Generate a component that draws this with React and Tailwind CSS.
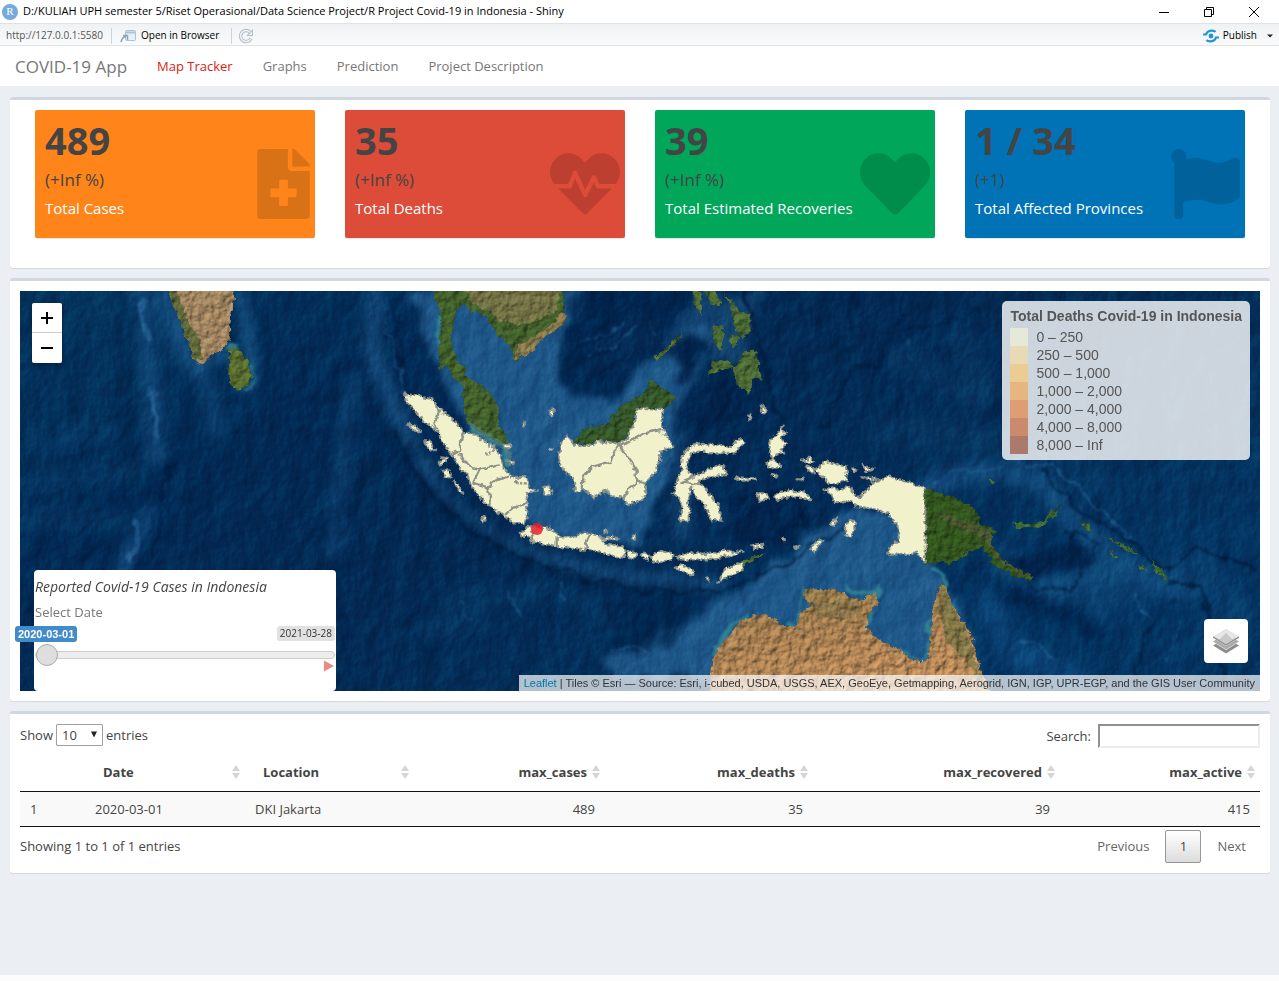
import React from "react";
import { FaFileMedical, FaHeartbeat, FaHeart, FaFlag } from "react-icons/fa";

const STATS = [
  { value: "489", change: "(+Inf %)", label: "Total Cases", bg: "bg-[#ff851b]", Icon: FaFileMedical, size: "h-[70px] w-[53px]" },
  { value: "35", change: "(+Inf %)", label: "Total Deaths", bg: "bg-[#dd4b39]", Icon: FaHeartbeat, size: "h-[70px] w-[70px]" },
  { value: "39", change: "(+Inf %)", label: "Total Estimated Recoveries", bg: "bg-[#00a65a]", Icon: FaHeart, size: "h-[70px] w-[70px]" },
  { value: "1 / 34", change: "(+1)", label: "Total Affected Provinces", bg: "bg-[#0073b7]", Icon: FaFlag, size: "h-[70px] w-[70px]" },
];

const LEGEND = [
  ["bg-[#e6e9d8]", "0 – 250"],
  ["bg-[#e8dab4]", "250 – 500"],
  ["bg-[#e9cd92]", "500 – 1,000"],
  ["bg-[#e7b57e]", "1,000 – 2,000"],
  ["bg-[#df9d74]", "2,000 – 4,000"],
  ["bg-[#cb8a6b]", "4,000 – 8,000"],
  ["bg-[#ab7a6c]", "8,000 – Inf"],
];

const NAV = ["Map Tracker", "Graphs", "Prediction", "Project Description"];

const COLUMNS = [
  { name: "Date", width: "w-[160px]" },
  { name: "Location", width: "w-[169px]" },
  { name: "max_cases", width: "w-[191px]", numeric: true },
  { name: "max_deaths", width: "w-[208px]", numeric: true },
  { name: "max_recovered", width: "w-[247px]", numeric: true },
  { name: "max_active", width: "w-[200px]", numeric: true },
];

/* Western half of the archipelago, drawn at three units per map pixel. */
const WEST_PROVINCES = [
  "72,340 90,345 125,352 160,358 170,378 188,398 230,428 250,455 290,465 315,480 345,500 362,528 370,560 395,592 430,588 440,605 455,625 470,632 440,640 442,700 435,732 400,730 375,710 330,680 285,640 262,590 235,555 215,522 195,500 172,452 140,430 110,400 78,365",
  "563,463 540,488 538,545 556,575 580,595 585,635 610,630 640,652 678,630 690,645 728,650 740,676 790,658 802,600 832,572 842,512 882,500 852,460 845,425 850,390 770,385 765,430 740,478 712,490 655,484 640,498 580,494",
  "440,738 436,752 415,765 452,770 455,786 525,800 590,805 640,812 700,828 732,836 730,800 680,795 662,770 625,756 598,762 590,775 540,770 522,748 478,742",
  "918,510 950,490 1050,500 1083,472 1096,488 1062,520 960,515 930,520 920,560 935,592 975,572 1030,555 1042,582 990,590 952,604 985,640 1018,680 1025,722 995,720 975,680 950,652 935,620 925,650 930,720 900,725 905,660 878,640 890,600 905,570 908,530",
  "740,815 765,815 772,830 745,836",
  "783,825 795,815 808,825 800,842",
  "812,830 840,815 880,825 875,838 820,848",
  "890,828 935,818 985,826 1030,812 1095,816 1050,828 985,838 900,838",
  "885,860 910,855 945,875 942,888 905,876",
  "1012,908 1040,865 1090,845 1088,870 1055,885",
  "1115,800 1150,792 1148,802 1120,808",
  "405,605 425,590 440,595 448,615 430,612",
  "492,625 508,620 514,638 498,645",
  "85,435 100,433 120,452 108,455",
  "135,485 152,482 165,510 150,512",
  "178,550 190,530 200,535 185,555",
  "188,570 205,568 212,592 198,590",
  "220,605 235,612 252,645 240,638",
  "508,390 520,388 522,405 512,408",
  "368,495 395,492 392,505 372,504",
  "385,545 405,540 400,552 388,555",
  "1068,592 1125,595 1128,602 1070,602",
  "1125,640 1150,640 1168,655 1140,665",
  "1145,375 1155,380 1150,402 1143,395",
  "665,772 718,770 715,776 668,780",
  "1104,408 1112,406 1114,420 1106,420",
];
const WEST_BORDERS = [
  "168,375 175,402 160,430 170,450",
  "250,455 240,490 238,512 215,524",
  "238,520 262,555 300,568 360,556",
  "300,568 280,608 322,622 350,600 385,590",
  "322,622 330,650 328,680",
  "440,670 398,684 375,705",
  "608,630 610,590 640,560 690,545 712,500 740,490 790,460 845,450",
  "712,490 735,520 770,572 770,610 745,632 730,655",
  "770,600 800,612",
  "455,755 462,786",
  "530,770 530,800",
  "630,758 615,790 625,808",
  "938,592 905,605 960,612",
];
/* Eastern half, same scale with its own origin. */
const EAST_PROVINCES = [
  "300,650 320,628 345,605 385,588 440,605 495,625 498,850 465,818 430,822 385,825 388,805 405,788 418,788 412,735 385,702 330,685 295,680 270,662 222,672 215,645 190,628 235,628 265,618 285,650",
  "165,570 185,552 210,546 258,562 264,600 215,612 188,592",
  "28,485 50,465 68,440 76,460 60,482 80,490 62,510 80,524 50,520 42,545 30,520",
  "20,550 40,540 68,560 40,565",
  "125,540 150,532 164,544 140,548",
  "140,560 158,565 165,582 148,580",
  "-10,640 15,640 28,655 0,664",
  "45,645 80,632 130,635 155,662 130,655 90,650 50,660",
  "258,735 270,715 288,730 275,772 258,770",
  "150,810 178,776 190,780 165,815",
  "212,735 230,712 228,735 216,742",
  "305,555 340,568 320,576",
  "305,592 350,595 340,600",
  "110,598 135,596 130,605",
  "32,585 55,588 45,595",
  "100,800 115,798 114,808",
];

const poly = (list) => list.map((points) => <polygon key={points} points={points} />);

function SatelliteMap() {
  return (
    <svg
      className="absolute inset-0 h-full w-full"
      viewBox="20 291 1240 400"
      preserveAspectRatio="xMidYMid slice"
      colorInterpolationFilters="sRGB"
      role="img"
      aria-label="Satellite map of Indonesia with provinces highlighted"
    >
      <defs>
        <linearGradient id="ocean" x1="0" y1="0" x2="1" y2="0.6">
          <stop offset="0" stopColor="#04355f" />
          <stop offset="0.3" stopColor="#022954" />
          <stop offset="0.55" stopColor="#032953" />
          <stop offset="1" stopColor="#043462" />
        </linearGradient>
        <linearGradient id="outback" x1="0" y1="0" x2="0.3" y2="1">
          <stop offset="0" stopColor="#8a7745" />
          <stop offset="0.5" stopColor="#a98052" />
          <stop offset="1" stopColor="#bd8d5b" />
        </linearGradient>
        <filter id="soft" x="-20%" y="-20%" width="140%" height="140%">
          <feGaussianBlur stdDeviation="6" />
        </filter>
        <filter id="softer" x="-20%" y="-20%" width="140%" height="140%">
          <feTurbulence type="fractalNoise" baseFrequency="0.04" numOctaves="4" seed="8" result="n" />
          <feDisplacementMap in="SourceGraphic" in2="n" scale="22" xChannelSelector="R" yChannelSelector="G" />
          <feGaussianBlur stdDeviation="3" />
        </filter>
        <filter id="coast" x="-5%" y="-5%" width="110%" height="110%">
          <feTurbulence type="fractalNoise" baseFrequency="0.14" numOctaves="2" seed="3" result="n" />
          <feDisplacementMap in="SourceGraphic" in2="n" scale="6" xChannelSelector="R" yChannelSelector="G" />
        </filter>
        <filter id="ridge" x="-5%" y="-5%" width="110%" height="110%">
          <feTurbulence type="fractalNoise" baseFrequency="0.05" numOctaves="4" seed="5" result="n" />
          <feDisplacementMap in="SourceGraphic" in2="n" scale="18" xChannelSelector="R" yChannelSelector="G" />
          <feGaussianBlur stdDeviation="1" />
        </filter>
        <filter id="relief" x="0" y="0" width="100%" height="100%">
          <feTurbulence type="fractalNoise" baseFrequency="0.04 0.03" numOctaves="5" seed="21" result="n" />
          <feDiffuseLighting in="n" surfaceScale="3" lightingColor="#ffffff">
            <feDistantLight azimuth="215" elevation="30" />
          </feDiffuseLighting>
        </filter>
        <filter id="ground" x="-5%" y="-5%" width="110%" height="110%">
          <feTurbulence type="fractalNoise" baseFrequency="0.15" numOctaves="3" seed="3" result="n" />
          <feDisplacementMap in="SourceGraphic" in2="n" scale="8" xChannelSelector="R" yChannelSelector="G" result="shape" />
          <feTurbulence type="fractalNoise" baseFrequency="0.12" numOctaves="4" seed="9" result="g" />
          <feDiffuseLighting in="g" surfaceScale="2" lightingColor="#ffffff" result="lit">
            <feDistantLight azimuth="225" elevation="55" />
          </feDiffuseLighting>
          <feComposite in="shape" in2="lit" operator="arithmetic" k1="1.15" k2="0.05" k3="0" k4="0" result="mix" />
          <feComposite in="mix" in2="shape" operator="in" />
        </filter>
      </defs>

      <rect x="20" y="291" width="1240" height="400" fill="url(#ocean)" />

      {/* Raised sea floor and trenches */}
      <g filter="url(#soft)" fill="none" strokeLinecap="round" strokeLinejoin="round">
        <path d="M143 290 L146 340 L154 400 L156 455" stroke="#17568c" strokeWidth="20" opacity="0.5" />
        <path d="M160 300 Q178 360 200 372 Q215 400 215 430" stroke="#145084" strokeWidth="18" opacity="0.5" />
        <path d="M165 290 L195 368 L226 352 L245 390 L254 375 L240 291" stroke="#1d5f92" strokeWidth="7" />
        <path d="M150 510 L130 550 L120 575" stroke="#15548a" strokeWidth="14" opacity="0.6" />
        <path d="M352 380 L345 440 L338 500 L334 550" stroke="#12497b" strokeWidth="16" opacity="0.5" />
        <path d="M376 291 L372 350 L390 400 L410 440" stroke="#185384" strokeWidth="16" opacity="0.8" />
        <path d="M420 460 Q450 520 520 552 Q600 580 720 586" stroke="#164f80" strokeWidth="16" opacity="0.8" />
        <path d="M395 432 Q420 500 500 548 Q580 592 700 592" stroke="#001f45" strokeWidth="9" />
        <path d="M35 440 L110 430 M30 480 L130 470 M30 520 L120 520" stroke="#0c4576" strokeWidth="24" opacity="0.35" />
        <path d="M445 600 L560 590 L620 620 M430 630 L480 620" stroke="#0b4070" strokeWidth="22" opacity="0.4" />
        <path d="M900 360 L980 390 L960 340 M880 430 L990 440 L1100 480" stroke="#0d4574" strokeWidth="30" opacity="0.3" />
        <path d="M925 490 Q980 460 1040 480 L1080 530 L1150 580 L1185 590" stroke="#134e80" strokeWidth="22" opacity="0.8" />
        <path d="M1000 560 L1060 590 L1120 570" stroke="#124d7e" strokeWidth="24" opacity="0.8" />
        <path d="M1090 610 L1200 560 L1240 620" stroke="#0e4b7d" strokeWidth="30" opacity="0.4" />
        <path d="M985 600 L1010 650 L1080 680" stroke="#10518a" strokeWidth="26" opacity="0.5" />
        <path d="M1000 590 L1080 620 L1100 640" stroke="#012650" strokeWidth="18" />
      </g>
      <g filter="url(#softer)" fill="#1d5788">
        <path d="M455 291 L585 291 L565 340 L558 372 L575 398 L610 398 L640 370 L680 350 L690 330 L710 320 L712 340 L690 380 L675 410 L672 460 L650 520 L640 545 L560 540 L520 520 L470 430 L440 380 L410 291 Z" />
        <path d="M700 691 L688 670 L620 680 L600 660 L690 620 L760 575 L800 548 L838 520 L860 505 L920 530 L935 570 L960 600 L985 691 Z" />
        <path d="M635 310 Q660 310 655 340 L620 370 L575 375 L570 345 Z" opacity="0.35" />
        <path d="M700 360 L745 365 L765 291 L700 291 L660 345 Z" opacity="0.5" />
        <path d="M672 440 L690 430 L690 530 L670 545 Z" opacity="0.4" />
      </g>
      <g filter="url(#softer)" fill="#02234c">
        <path d="M570 295 L690 291 L660 330 L600 385 L565 365 Z" opacity="0.75" />
        <path d="M695 385 L750 372 L745 415 L700 430 L680 415 Z" />
        <path d="M672 345 L705 335 L712 350 L680 382 Z" />
        <path d="M730 495 L800 490 L810 520 L780 545 L720 535 Z" opacity="0.8" />
        <path d="M600 600 L690 600 L670 650 L615 650 Z" opacity="0.7" />
        <path d="M990 550 L1030 560 L1075 535 L1090 560 L1030 580 Z" />
      </g>

      {/* Fine ridges on the sea floor */}
      <g filter="url(#ridge)" fill="none" stroke="#001b3d" strokeWidth="2" opacity="0.7">
        <path d="M167 460 L158 530 L152 575" />
        <path d="M851 291 L850 380 L820 430 M905 291 L900 325 L880 365 L852 370 M900 332 L950 325 L985 305" strokeWidth="3" />
        <path d="M742 291 L762 350 L772 400 L785 420" strokeWidth="5" />
        <path d="M395 432 Q420 500 500 548 Q580 592 700 592 Q730 592 790 560 L850 520" strokeWidth="3" />
        <path d="M1040 470 L1080 510 L1130 540 L1165 570 L1200 550 L1258 570" strokeWidth="3" />
        <path d="M1165 582 L1200 590 L1212 630 L1225 691" strokeWidth="4" />
        <path d="M1135 691 L1145 630 L1175 600 M1060 530 L1100 545 L1070 590 L1030 585" />
        <path d="M740 500 Q800 480 808 510 Q800 540 745 540" strokeWidth="4" />
        <path d="M575 350 L610 330 M580 365 L625 340 M600 375 L645 345 M600 325 L630 318" />
        <path d="M437 591 L436 691 M290 560 L285 680 M340 530 L350 680" opacity="0.4" />
        <path d="M386 310 L390 340 L400 360 M396 300 L400 345" />
        <path d="M50 470 L120 410 M55 495 L130 430 M60 520 L135 450 M70 540 L140 475 M80 560 L140 505" opacity="0.5" />
      </g>
      <g filter="url(#ridge)" fill="none" stroke="#3273a5" strokeWidth="1.4" opacity="0.55">
        <path d="M152 385 L156 440 M143 295 L145 340 M135 520 L138 545 L128 560" strokeWidth="5" />
        <path d="M580 340 L625 325 M590 358 L640 330 M650 320 L655 335" />
        <path d="M385 300 L392 350 L410 410" />
        <path d="M1000 465 Q1050 455 1090 500 L1140 545 M930 490 Q950 465 1000 468" />
        <path d="M1130 590 L1150 620 M1180 620 L1170 660 M1020 640 L1060 660 M905 340 L915 360" />
        <path d="M460 600 L470 620 M510 590 L520 615 M560 580 L565 600 M610 650 L650 652" />
      </g>

      <rect x="20" y="291" width="1240" height="400" filter="url(#relief)" className="mix-blend-soft-light" opacity="0.45" />

      {/* Coastal shallows */}
      <g filter="url(#ridge)" fill="none" stroke="#36909b" strokeWidth="5" opacity="0.75">
        <path d="M712 655 L722 640 L740 622 L752 612" />
        <path d="M803 590 L822 597 M850 594 L877 588 L868 628" />
        <path d="M785 628 L797 626 L803 595" strokeWidth="3" />
        <path d="M900 650 L925 661 L932 620" strokeWidth="3" />
        <path d="M930 566 L948 575 L944 590 L955 612" />
        <path d="M225 345 L238 350" strokeWidth="8" />
        <path d="M440 310 L440 350 M467 425 L500 446 M505 440 L508 465" />
        <path d="M252 365 L254 380 L243 391" strokeWidth="2" />
      </g>

      {/* Land outside Indonesia */}
      <g filter="url(#ground)">
        <path d="M168 289 L172 304 L180 320 L186 335 L190 350 L194 360 L200 364 L208 362 L213 354 L225 348 L230 340 L229 325 L233 309 L235 289 Z" fill="#a28661" />
        <path d="M168 289 L172 304 L180 320 L186 335 L190 350 L196 361 L203 358 L200 340 L190 325 L184 308 L176 289 Z" fill="#626a3a" />
        <path d="M230 350 L238 348 L248 360 L253 375 L249 385 L240 390 L232 389 L229 375 Z" fill="#5a6e2f" />
        <path d="M433 289 L438 305 L442 325 L438 345 L440 368 L447 366 L452 375 L462 386 L463 405 L466 420 L475 428 L490 438 L500 445 L508 443 L505 432 L498 425 L498 408 L492 395 L478 382 L468 378 L464 368 L456 357 L450 345 L452 330 L457 310 L465 303 L469 313 L476 311 L487 318 L494 330 L505 340 L512 345 L512 358 L517 361 L531 350 L541 337 L550 330 L561 322 L564 309 L562 289 Z" fill="#43612c" />
        <path d="M466 289 L472 305 L490 311 L500 322 L515 325 L540 320 L558 310 L560 289 Z" fill="#737245" />
        <path d="M515 360 L518 345 L535 335 L548 328 L556 322 L563 310 L566 322 L541 341 L530 352 Z" fill="#8b7a4c" />
        <path d="M573 444 L586 427 L606 425 L622 404 L640 396 L653 380 L662 388 L676 397 L664 410 L636 409 L634 424 L626 440 L618 444 L598 441 L591 446 Z" fill="#36592a" />
        <path d="M654 358 L668 345 L682 332 L678 342 L662 356 L655 361 Z M704 289 L712 305 L722 307 L716 289 Z M722 289 L740 310 L750 315 L752 330 L742 340 L735 330 L730 305 Z M712 325 L722 325 L724 350 L715 348 Z M730 335 L740 338 L732 350 Z M708 375 L712 362 L728 360 L735 368 L745 352 L756 350 L762 380 L752 378 L750 394 L738 386 L732 368 L718 372 Z M692 291 L702 291 L702 316 L696 308 Z" fill="#4c6b35" />
        <path d="M924 488 L947 495 L968 503 L978 513 L980 523 L1000 530 L990 535 L990 543 L1007 563 L1032 576 L1030 580 L1013 575 L997 567 L983 548 L967 552 L957 562 L925 564 Z" fill="#34571f" />
        <path d="M935 512 L960 520 L975 524 L990 533 L993 548 L1007 563 L1032 577 L1010 570 L995 556 L982 536 L950 524 Z" fill="#4a5730" />
        <path d="M1012 524 L1040 522 L1056 508 L1053 518 L1040 528 L1015 527 Z M1058 502 L1062 510 L1056 508 Z M1080 517 L1094 530 L1088 533 Z M1100 534 L1130 548 L1140 557 L1125 550 Z M1108 550 L1120 556 L1112 556 Z M1136 565 L1150 568 L1142 571 Z M1148 556 L1160 568 L1168 582 L1158 573 Z M988 481 L997 481 L992 485 Z" fill="#3e6733" />
        <path d="M742 562 L752 556 L768 554 L750 562 L742 567 Z" fill="#4e6f34" />
        <path d="M708 695 L711 675 L712 660 L722 643 L740 622 L752 615 L765 614 L775 620 L785 627 L795 626 L800 612 L815 605 L803 598 L804 588 L825 588 L840 592 L860 600 L877 592 L877 604 L870 610 L866 628 L880 640 L897 649 L915 661 L926 661 L931 640 L932 610 L938 590 L942 582 L948 592 L955 612 L963 622 L972 635 L977 655 L983 675 L992 695 Z" fill="url(#outback)" />
        <path d="M942 584 L948 594 L953 612 L968 632 L974 655 L985 691 L965 660 L945 640 L938 610 Z" fill="#6f7040" opacity="0.7" />
        <path d="M806 602 L860 602 L864 612 L845 620 L815 616 Z" fill="#85734a" opacity="0.7" />
      </g>

      {/* Indonesian provinces */}
      <g filter="url(#coast)" fill="#f1f2cb" stroke="#8f9188" strokeWidth="7" strokeDasharray="9 5" strokeLinejoin="round">
        <g transform="translate(380 280) scale(0.3333)">
          {poly(WEST_PROVINCES)}
          {WEST_BORDERS.map((points) => (
            <polyline key={points} points={points} fill="none" strokeDasharray="none" />
          ))}
          <path d="M262 430 L300 452 L350 480 L385 520 L385 560" fill="none" stroke="#5f8b80" strokeWidth="14" opacity="0.55" strokeDasharray="none" />
          <path d="M300 480 L345 505 L335 520 L312 520" fill="none" />
          <circle cx="432" cy="432" r="4" />
          <circle cx="512" cy="506" r="4" />
          <circle cx="312" cy="718" r="5" />
          <circle cx="675" cy="755" r="4" />
          <circle cx="762" cy="770" r="6" />
          <circle cx="984" cy="894" r="5" />
        </g>
        <g transform="translate(760 280) scale(0.3333)">
          {poly(EAST_PROVINCES)}
          <circle cx="285" cy="568" r="5" />
          <circle cx="72" cy="778" r="5" />
          <circle cx="10" cy="388" r="7" />
        </g>
      </g>
      <circle cx="537" cy="529" r="6" fill="#e8202a" opacity="0.85" />
    </svg>
  );
}

function LayersIcon() {
  return (
    <svg viewBox="0 0 26 26" className="h-[26px] w-[26px]" aria-hidden="true">
      <path d="M0 17.500 L13 25.500 L26 17.500 L23 15.700 L13 22 L3 15.700 Z" fill="#8d8d8d" />
      <path d="M0 13.500 L13 21.500 L26 13.500 L23 11.700 L13 18 L3 11.700 Z" fill="#ababab" />
      <path d="M0 9 L13 17 L26 9 L13 1 Z" fill="#c9c9c9" />
      <path d="M0 9 L13 1 L26 9 L19 11 L13 5 L7 11 Z" fill="#e6e6e6" />
      <path d="M0 9 L13 17 L26 9" fill="none" stroke="#8a8a8a" strokeWidth="1.2" />
    </svg>
  );
}

function Box({ label, className, children }) {
  return (
    <section aria-label={label} className={`rounded-[3px] border-t-[3px] border-[#d2d6de] bg-white p-2.5 shadow-[0_1px_1px_rgba(0,0,0,0.1)] ${className || ""}`}>
      {children}
    </section>
  );
}

function TitleBar() {
  return (
    <header className="flex h-[23px] items-center bg-white pr-5 pl-0.5 text-[11px] text-black">
      <span className="flex h-4 w-4 items-center justify-center rounded-full bg-[#75aadb] font-['Liberation_Serif',serif] text-[11px] text-white">R</span>
      <h1 className="ml-[5px] flex-1">D:/KULIAH UPH semester 5/Riset Operasional/Data Science Project/R Project Covid-19 in Indonesia - Shiny</h1>
      <div className="flex items-center gap-[35px]">
        <button aria-label="Minimize">
          <svg viewBox="0 0 10 10" className="h-2.5 w-2.5"><path d="M0 5.500 H10" stroke="#000" /></svg>
        </button>
        <button aria-label="Restore">
          <svg viewBox="0 0 10 10" className="h-2.5 w-2.5" fill="none" stroke="#000"><path d="M0.500 2.500 H7.500 V9.500 H0.500 Z M2.500 2.500 V0.500 H9.500 V7.500 H7.500" /></svg>
        </button>
        <button aria-label="Close">
          <svg viewBox="0 0 10 10" className="h-2.5 w-2.5"><path d="M0 0 L10 10 M10 0 L0 10" stroke="#000" /></svg>
        </button>
      </div>
    </header>
  );
}

function Toolbar() {
  return (
    <div className="flex h-[23px] items-center border-y border-[#dfe3e6] bg-linear-to-b from-[#eff1f3] to-[#fafbfb] px-1.5 pt-0.5 text-[10px] text-black">
      <span className="text-[#555]">http://127.0.0.1:5580</span>
      <span className="mx-2 h-4 w-px bg-[#cfd3d6]" />
      <button className="flex items-center gap-[5px]">
        <svg viewBox="0 0 16 14" className="h-3.5 w-4" fill="none" aria-hidden="true">
          <rect x="5.500" y="1.500" width="10" height="10" rx="1" fill="#e8f1f8" stroke="#a9c3d8" />
          <path d="M5.500 3.500 H15.500" stroke="#a9c3d8" strokeWidth="2" />
          <path d="M1 13 Q2 8 6 7.500 M3 6.500 H7.500 V11" stroke="#8aa5b8" strokeWidth="1.500" />
        </svg>
        Open in Browser
      </button>
      <span className="mr-1.5 ml-3 h-4 w-px bg-[#cfd3d6]" />
      <button aria-label="Reload">
        <svg viewBox="0 0 16 16" className="h-4 w-4" fill="none" aria-hidden="true">
          <path d="M13 10.500 A5.500 5.500 0 1 1 12 4.200" stroke="#b3bfcc" strokeWidth="3.500" />
          <path d="M15 1 V8 H8 Z" fill="#b3bfcc" />
          <path d="M13 10.500 A5.500 5.500 0 1 1 12 4.200" stroke="#eef2f6" strokeWidth="1.600" />
          <path d="M14 3.500 V7 H10.500 Z" fill="#eef2f6" />
        </svg>
      </button>
      <button className="ml-auto flex items-center gap-1">
        <svg viewBox="0 0 16 14" className="h-3.5 w-4" fill="none" stroke="#2196d3" strokeWidth="2.200" aria-hidden="true">
          <path d="M0 5.500 H3 Q4.500 1.500 9 1.600 Q11.500 1.700 12.500 3" />
          <path d="M16 8.500 H13 Q11.500 12.500 7 12.400 Q4.500 12.300 3.500 11" />
          <circle cx="8" cy="7" r="2.400" fill="#2196d3" stroke="none" />
        </svg>
        Publish
      </button>
      <button aria-label="Publish options" className="ml-2.5">
        <svg viewBox="0 0 6 4" className="h-1 w-1.5"><path d="M0 0.500 H6 L3 3.500 Z" fill="#222" /></svg>
      </button>
    </div>
  );
}

function DatePanel() {
  return (
    <div className="absolute bottom-0 left-3.5 h-[121px] w-[302px] rounded bg-white px-px pt-2 text-[13px]">
      <p className="text-sm leading-[18px] text-[#444] italic">Reported Covid-19 Cases in Indonesia</p>
      <label htmlFor="date-slider" className="mt-[7px] block leading-[18px] text-[#777]">Select Date</label>
      <div className="mt-[5px] flex h-4 items-start justify-between">
        <output htmlFor="date-slider" className="-ml-5 rounded-[3px] bg-[#428bca] px-[3px] font-['Liberation_Sans',Arial,sans-serif] text-[11px] leading-4 font-bold text-white">2020-03-01</output>
        <span className="rounded-[3px] bg-[#e1e1e1] px-[3px] text-[10px] leading-[15px] text-[#333]">2021-03-28</span>
      </div>
      <input
        id="date-slider"
        type="range"
        min="0"
        max="392"
        defaultValue="0"
        className="block h-[25px] w-full appearance-none bg-transparent [&::-webkit-slider-runnable-track]:h-2 [&::-webkit-slider-runnable-track]:rounded-lg [&::-webkit-slider-runnable-track]:border [&::-webkit-slider-runnable-track]:border-[#ccc] [&::-webkit-slider-runnable-track]:bg-[#ededed] [&::-webkit-slider-thumb]:-mt-2 [&::-webkit-slider-thumb]:h-[22px] [&::-webkit-slider-thumb]:w-[22px] [&::-webkit-slider-thumb]:appearance-none [&::-webkit-slider-thumb]:rounded-full [&::-webkit-slider-thumb]:border [&::-webkit-slider-thumb]:border-[#aaa] [&::-webkit-slider-thumb]:bg-[#dedede]"
      />
      <div className="flex justify-end pr-px">
        <button aria-label="Play">
          <svg viewBox="0 0 10 12" className="-mt-[7px] h-3 w-2.5"><path d="M0 0.500 L10 6 L0 11.500 Z" fill="#e98b83" /></svg>
        </button>
      </div>
    </div>
  );
}

function MapPanel() {
  return (
    <div className="relative h-[400px] font-['Liberation_Sans',Arial,sans-serif]">
      <SatelliteMap />
      <div className="absolute top-3 left-3 flex flex-col rounded-[2px] bg-white shadow-[0_1px_5px_rgba(0,0,0,0.4)]">
        <button aria-label="Zoom in" className="flex h-[30px] w-[30px] items-center justify-center border-b border-[#ccc]">
          <svg viewBox="0 0 12 12" className="h-3 w-3"><path d="M0 6 H12 M6 0 V12" stroke="#000" strokeWidth="2" /></svg>
        </button>
        <button aria-label="Zoom out" className="flex h-[30px] w-[30px] items-center justify-center">
          <svg viewBox="0 0 12 12" className="h-3 w-3"><path d="M0 6 H12" stroke="#000" strokeWidth="2" /></svg>
        </button>
      </div>
      <div className="absolute top-2.5 right-2.5 rounded-[5px] bg-white/80 px-2 py-1.5 text-sm leading-[18px] text-[#555]">
        <p className="mb-[3px] text-center font-bold">Total Deaths Covid-19 in Indonesia</p>
        <ul>
          {LEGEND.map(([color, range]) => (
            <li key={range} className="flex items-center gap-2">
              <span className={`h-[18px] w-[18px] ${color}`} />
              {range}
            </li>
          ))}
        </ul>
      </div>
      <button aria-label="Layers" className="absolute right-3 bottom-7 flex h-11 w-11 items-center justify-center rounded-[4px] bg-white">
        <LayersIcon />
      </button>
      <p className="absolute right-0 bottom-0 bg-white/70 px-[5px] text-[11px] leading-4 text-[#333]">
        <a href="#leaflet" className="text-[#0078a8]">Leaflet</a> | Tiles © Esri — Source: Esri, i-cubed, USDA, USGS, AEX, GeoEye, Getmapping, Aerogrid, IGN, IGP, UPR-EGP, and the GIS User Community
      </p>
      <div className="font-['Open_Sans',sans-serif]">
        <DatePanel />
      </div>
    </div>
  );
}

function SortIcon() {
  return (
    <svg viewBox="0 0 8 14" className="h-3.5 w-2 shrink-0" fill="#d5d5d5" aria-hidden="true">
      <path d="M4 0 L8 6 H0 Z M0 8 H8 L4 14 Z" />
    </svg>
  );
}

function DataTable() {
  return (
    <div className="text-[13px] leading-[18px] text-[#444]">
      <div className="flex items-start justify-between">
        <div className="flex items-center gap-[3px]">
          <label htmlFor="page-length">Show</label>
          <span className="relative">
            <select id="page-length" defaultValue="10" className="block h-[22px] w-[47px] appearance-none rounded-[1px] border border-[#a0a0a0] bg-white pl-[5px]">
              <option>10</option>
              <option>25</option>
              <option>50</option>
              <option>100</option>
            </select>
            <svg viewBox="0 0 6 7" className="pointer-events-none absolute top-[7px] right-1.5 h-[7px] w-1.5"><path d="M0 0.500 H6 L3 6.500 Z" fill="#222" /></svg>
          </span>
          <span>entries</span>
        </div>
        <div className="flex items-center gap-[7px]">
          <label htmlFor="table-search">Search:</label>
          <input id="table-search" type="search" className="h-6 w-[162px] border-2 border-t-[#909090] border-r-[#ececec] border-b-[#ececec] border-l-[#909090] bg-white px-1" />
        </div>
      </div>
      <table className="mt-[5px] w-full table-fixed border-collapse">
        <thead>
          <tr className="h-[38px] border-b border-[#111]">
            <th className="w-[65px]" aria-label="Row" />
            {COLUMNS.map((c) => (
              <th key={c.name} scope="col" className={`pr-[5px] pl-[18px] ${c.width}`}>
                <button className={`flex w-full items-center gap-[5px] font-bold ${c.numeric ? "justify-end" : "justify-between"}`}>
                  {c.name}
                  <SortIcon />
                </button>
              </th>
            ))}
          </tr>
        </thead>
        <tbody>
          <tr className="h-[35px] border-b border-[#111] bg-[#f9f9f9]">
            <td className="px-2.5">1</td>
            <td className="px-2.5">2020-03-01</td>
            <td className="px-2.5">DKI Jakarta</td>
            <td className="px-2.5 text-right">489</td>
            <td className="px-2.5 text-right">35</td>
            <td className="px-2.5 text-right">39</td>
            <td className="px-2.5 text-right">415</td>
          </tr>
        </tbody>
      </table>
      <div className="flex items-center justify-between pt-[3px]">
        <p>Showing 1 to 1 of 1 entries</p>
        <nav aria-label="Table pages" className="flex items-center gap-4 pr-3.5 text-[#666]">
          <button>Previous</button>
          <button className="h-[33px] w-9 rounded-[2px] border border-[#979797] bg-linear-to-b from-white to-[#dcdcdc] text-[#444]">1</button>
          <button>Next</button>
        </nav>
      </div>
    </div>
  );
}

export default function App() {
  return (
    <div className="flex min-h-screen flex-col bg-[#fcfcfc] font-['Open_Sans',sans-serif]">
      <TitleBar />
      <Toolbar />
      <nav aria-label="Main" className="flex h-10 items-center bg-white px-[15px] pt-px text-[13px] text-[#777]">
        <a href="#home" className="mr-[30px] text-[17px]">COVID-19 App</a>
        <ul className="flex gap-[30px]">
          {NAV.map((item, i) => (
            <li key={item}>
              <a href={`#tab-${i}`} className={i === 0 ? "text-[#d9230f]" : ""}>{item}</a>
            </li>
          ))}
        </ul>
      </nav>
      <main className="mb-1.5 flex flex-1 flex-col gap-2.5 bg-[#ebeef3] pt-[11px] pr-[9px] pl-2.5">
        <Box label="Summary" className="pb-[30px]">
          <div className="grid grid-cols-4 gap-[30px] px-[15px]">
            {STATS.map(({ value, change, label, bg, Icon, size }) => (
              <article key={label} className={`relative h-32 rounded-[2px] p-2.5 shadow-[0_1px_1px_rgba(0,0,0,0.1)] ${bg}`}>
                <Icon className={`absolute top-[39px] right-[5px] text-black/15 ${size}`} aria-hidden="true" />
                <p className="text-[38px] leading-10 font-bold text-[#444]">{value}</p>
                <p className="mt-2 text-[17px] leading-6 text-[#444]">{change}</p>
                <p className="mt-1.5 text-[15px] leading-5 text-white">{label}</p>
              </article>
            ))}
          </div>
        </Box>
        <Box label="Map">
          <MapPanel />
        </Box>
        <Box label="Records">
          <DataTable />
        </Box>
      </main>
    </div>
  );
}
